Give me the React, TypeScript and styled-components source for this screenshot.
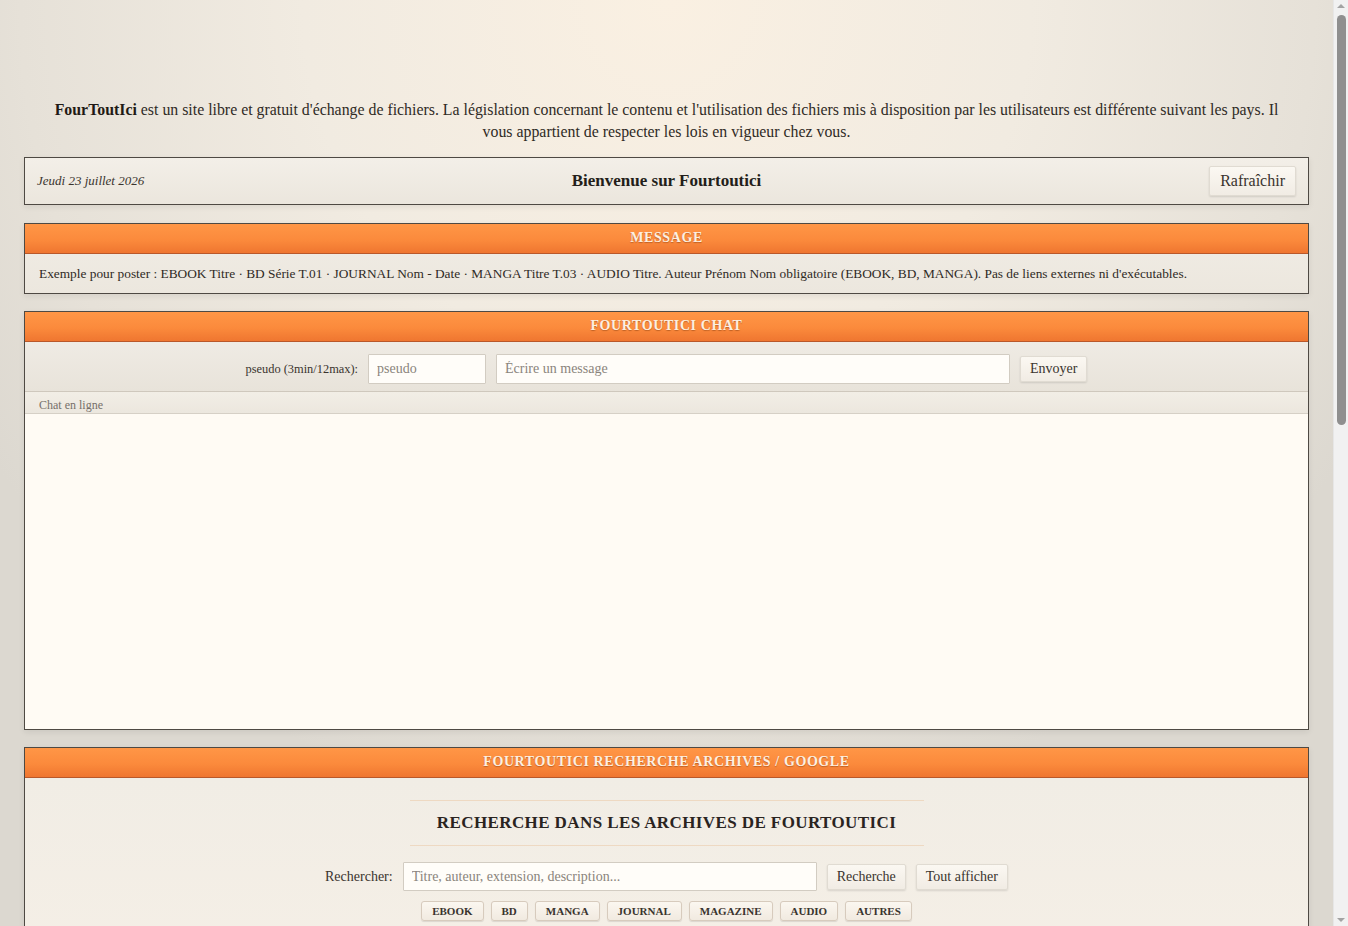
import React from "react";
import styled, { createGlobalStyle } from "styled-components";

const GlobalStyle = createGlobalStyle`
  html, body { margin: 0; padding: 0; }
  body {
    font-family: "Liberation Serif", "Times New Roman", serif;
    color: #2f2a25;
    background-color: #e4e0d8;
    background-image: radial-gradient(ellipse 60% 90% at 49.5% 0%, #faf0e2 0%, #f1ebe1 45%, #e6e1d8 80%, #dcd8d0 100%);
    background-attachment: fixed;
    min-height: 100vh;
  }
  * { box-sizing: border-box; }
`;

const Page = styled.div`
  padding: 99px 39px 40px 24px;
  display: flex;
  flex-direction: column;
`;

const ScrollTrack = styled.div`
  position: fixed;
  top: 0;
  right: 0;
  width: 15px;
  height: 100vh;
  background: #f1f1f1;
  border-left: 1px solid #e6e6e6;
  display: flex;
  flex-direction: column;
  align-items: center;
  justify-content: space-between;
  padding: 4px 0;
`;

const ScrollArrow = styled.div<{ $down?: boolean }>`
  width: 0;
  height: 0;
  border-left: 4px solid transparent;
  border-right: 4px solid transparent;
  ${(p) => (p.$down ? "border-top: 4px solid #a3a3a3;" : "border-bottom: 4px solid #a3a3a3;")}
`;

const ScrollThumb = styled.div`
  position: absolute;
  top: 15px;
  left: 3px;
  width: 9px;
  height: 410px;
  border-radius: 5px;
  background: #8f8f8f;
`;

const Intro = styled.p`
  margin: 0 0 14px;
  padding: 0 20px;
  text-align: center;
  font-size: 15.85px;
  line-height: 22px;
  color: #2f2a25;
  b { font-weight: bold; color: #1f1a15; }
`;

const WelcomeBar = styled.div`
  height: 48px;
  border: 1px solid #4e4943;
  background: linear-gradient(180deg, #f3efe8 0%, #ebe6dd 100%);
  box-shadow: 0 2px 6px rgba(0, 0, 0, 0.08);
  display: grid;
  grid-template-columns: 1fr auto 1fr;
  align-items: center;
  padding: 0 12px;
  margin-bottom: 18px;
`;

const DateText = styled.span`
  font-style: italic;
  font-size: 13px;
  color: #3a352f;
`;

const WelcomeTitle = styled.span`
  font-weight: bold;
  font-size: 17px;
  color: #231e19;
`;

const Button = styled.button<{ $size?: "lg" | "md" }>`
  font-family: "Liberation Serif", "Times New Roman", serif;
  font-size: ${(p) => (p.$size === "lg" ? "16px" : "14px")};
  height: ${(p) => (p.$size === "lg" ? "30px" : "26px")};
  padding: ${(p) => (p.$size === "lg" ? "0 10px" : "0 9px")};
  color: #3a342e;
  background: linear-gradient(180deg, #fbf8f2 0%, #f1ece4 100%);
  border: 1px solid #e0dbd2;
  border-radius: 2px;
  box-shadow: 0 1px 2px rgba(0, 0, 0, 0.12);
  cursor: pointer;
`;

const RightCell = styled.div`
  display: flex;
  justify-content: flex-end;
`;

const Panel = styled.section`
  border: 1px solid #4e4943;
  background: linear-gradient(180deg, #f1ede6 0%, #ece7de 100%);
  box-shadow: 0 2px 6px rgba(0, 0, 0, 0.08);
  margin-bottom: 17px;
  display: flex;
  flex-direction: column;
`;

const PanelHeader = styled.h2`
  margin: 0;
  height: 30px;
  padding-bottom: 2px;
  display: flex;
  align-items: center;
  justify-content: center;
  background: linear-gradient(180deg, #ff9646 0%, #fb8a3c 55%, #ef7630 100%);
  border-bottom: 1px solid #b9582a;
  color: #fdefe0;
  font-size: 14px;
  font-weight: bold;
  letter-spacing: 0.6px;
  text-transform: uppercase;
  text-shadow: 0 1px 1px rgba(120, 50, 10, 0.45);
`;

const MessageBody = styled.div`
  padding: 11px 14px 11px;
  font-size: 13.35px;
  line-height: 17px;
  color: #2f2a25;
`;

const ChatForm = styled.form`
  height: 50px;
  padding-top: 5px;
  display: flex;
  align-items: center;
  justify-content: center;
  gap: 10px;
  background: linear-gradient(180deg, #efebe4 0%, #e8e3da 100%);
  border-bottom: 1px solid #cfc8bd;
`;

const Label = styled.label<{ $size?: number }>`
  font-size: ${(p) => p.$size ?? 12.4}px;
  color: #3a342e;
`;

const Input = styled.input<{ $w: number; $h?: number }>`
  width: ${(p) => p.$w}px;
  height: ${(p) => p.$h ?? 30}px;
  font-family: "Liberation Serif", "Times New Roman", serif;
  font-size: 14px;
  padding: 0 8px;
  color: #2f2a25;
  background: #fffdf9;
  border: 1px solid #d2ccc2;
  border-radius: 1px;
  outline: none;
  &::placeholder { color: #8a847c; }
`;

const ChatStatus = styled.div`
  height: 22px;
  padding: 5px 14px 0;
  display: flex;
  align-items: center;
  font-size: 12px;
  color: #76706a;
  background: linear-gradient(180deg, #f2eee6 0%, #ece7de 100%);
  border-bottom: 1px solid #d6d0c6;
`;

const ChatLog = styled.div`
  height: 315px;
  background: #fffbf4;
`;

const SearchBody = styled.div`
  padding: 22px 14px 20px;
  display: flex;
  flex-direction: column;
  align-items: center;
  background: linear-gradient(180deg, #f1ede5 0%, #f5efe6 100%);
`;

const SearchHeading = styled.h3`
  margin: 0 0 16px;
  width: 514px;
  height: 46px;
  display: flex;
  align-items: center;
  justify-content: center;
  border-top: 1px solid #eed9c2;
  border-bottom: 1px solid #eed9c2;
  font-size: 17px;
  font-weight: bold;
  letter-spacing: 0.4px;
  color: #2a241f;
  text-transform: uppercase;
`;

const SearchRow = styled.div`
  display: flex;
  align-items: center;
  gap: 10px;
  margin-bottom: 10px;
`;

const CategoryRow = styled.div`
  display: flex;
  gap: 7px;
  flex-wrap: wrap;
  justify-content: center;
`;

const CategoryButton = styled.button`
  font-family: "Liberation Serif", "Times New Roman", serif;
  font-size: 11px;
  font-weight: bold;
  height: 20px;
  padding: 0 10px;
  color: #3a342e;
  background: linear-gradient(180deg, #fbf7f0 0%, #f1eae0 100%);
  border: 1px solid #d7cbbd;
  border-radius: 3px;
  box-shadow: 0 1px 1px rgba(0, 0, 0, 0.1);
  cursor: pointer;
`;

const ResultsNote = styled.p`
  margin: 14px 0 0;
  font-size: 13px;
  color: #6a645d;
`;

const FileTable = styled.div`
  display: flex;
  flex-direction: column;
`;

const FileRow = styled.div<{ $alt?: boolean }>`
  display: grid;
  grid-template-columns: 110px 1fr 140px 90px;
  align-items: center;
  height: 30px;
  padding: 0 14px;
  font-size: 13px;
  background: ${(p) => (p.$alt ? "#f7f2ea" : "#fffbf4")};
  border-bottom: 1px solid #e3ddd3;
`;

const Tag = styled.span`
  font-size: 11px;
  font-weight: bold;
  color: #c0602a;
`;

const Footer = styled.footer`
  text-align: center;
  font-size: 13px;
  color: #5a544d;
  padding: 20px 0;
`;

const categories = ["EBOOK", "BD", "MANGA", "JOURNAL", "MAGAZINE", "AUDIO", "AUTRES"];

const files = [
  ["EBOOK", "Les Misérables - Victor Hugo", "Pseudo01", "2,4 Mo"],
  ["BD", "Astérix T.01 - Goscinny Uderzo", "Lecteur", "48 Mo"],
  ["MANGA", "One Piece T.03 - Eiichiro Oda", "Mangafan", "62 Mo"],
  ["JOURNAL", "Le Monde - 23 juillet 2026", "Infos", "12 Mo"],
  ["MAGAZINE", "Science et Vie - Juillet 2026", "Curieux", "35 Mo"],
  ["AUDIO", "L'Étranger. Albert Camus", "Audio75", "210 Mo"],
  ["EBOOK", "Germinal - Émile Zola", "Pseudo01", "1,8 Mo"],
  ["BD", "Tintin T.05 - Hergé", "Lecteur", "51 Mo"],
  ["AUTRES", "Guide de cuisine - Recettes", "Chef", "8 Mo"],
  ["EBOOK", "Madame Bovary - Gustave Flaubert", "Bibli", "2,1 Mo"],
];

export default function App() {
  return (
    <>
      <GlobalStyle />
      <Page>
        <Intro>
          <b>FourToutIci</b> est un site libre et gratuit d'échange de fichiers. La législation concernant le contenu et
          l'utilisation des fichiers mis à disposition par les utilisateurs est différente suivant les pays. Il vous
          appartient de respecter les lois en vigueur chez vous.
        </Intro>

        <WelcomeBar>
          <DateText>Jeudi 23 juillet 2026</DateText>
          <WelcomeTitle>Bienvenue sur Fourtoutici</WelcomeTitle>
          <RightCell>
            <Button $size="lg" type="button">Rafraîchir</Button>
          </RightCell>
        </WelcomeBar>

        <Panel>
          <PanelHeader>Message</PanelHeader>
          <MessageBody>
            Exemple pour poster : EBOOK Titre · BD Série T.01 · JOURNAL Nom - Date · MANGA Titre T.03 · AUDIO Titre.
            Auteur Prénom Nom obligatoire (EBOOK, BD, MANGA). Pas de liens externes ni d'exécutables.
          </MessageBody>
        </Panel>

        <Panel>
          <PanelHeader>Fourtoutici Chat</PanelHeader>
          <ChatForm onSubmit={(e) => e.preventDefault()}>
            <Label htmlFor="pseudo">pseudo (3min/12max):</Label>
            <Input id="pseudo" $w={118} placeholder="pseudo" />
            <Input $w={514} placeholder="Écrire un message" />
            <Button type="submit">Envoyer</Button>
          </ChatForm>
          <ChatStatus>Chat en ligne</ChatStatus>
          <ChatLog />
        </Panel>

        <Panel>
          <PanelHeader>Fourtoutici Recherche Archives / Google</PanelHeader>
          <SearchBody>
            <SearchHeading>Recherche dans les archives de Fourtoutici</SearchHeading>
            <SearchRow>
              <Label $size={14} htmlFor="q">Rechercher:</Label>
              <Input id="q" $w={414} $h={29} placeholder="Titre, auteur, extension, description..." />
              <Button type="button">Recherche</Button>
              <Button type="button">Tout afficher</Button>
            </SearchRow>
            <CategoryRow>
              {categories.map((c) => (
                <CategoryButton key={c} type="button">{c}</CategoryButton>
              ))}
            </CategoryRow>
            <ResultsNote>Sélectionnez une catégorie ou saisissez un mot-clé pour lancer la recherche.</ResultsNote>
          </SearchBody>
        </Panel>

        <Panel>
          <PanelHeader>Derniers fichiers partagés</PanelHeader>
          <FileTable>
            {files.map((f, i) => (
              <FileRow key={i} $alt={i % 2 === 1}>
                <Tag>{f[0]}</Tag>
                <span>{f[1]}</span>
                <span>{f[2]}</span>
                <span>{f[3]}</span>
              </FileRow>
            ))}
          </FileTable>
        </Panel>

        <Panel>
          <PanelHeader>Recherche Google</PanelHeader>
          <SearchBody>
            <SearchRow>
              <Label $size={14} htmlFor="g">Google:</Label>
              <Input id="g" $w={414} $h={29} placeholder="Rechercher sur le web..." />
              <Button type="button">Recherche</Button>
            </SearchRow>
          </SearchBody>
        </Panel>

        <Footer>FourToutIci · Site libre et gratuit d'échange de fichiers · 2026</Footer>
      </Page>
      <ScrollTrack aria-hidden="true">
        <ScrollArrow />
        <ScrollThumb />
        <ScrollArrow $down />
      </ScrollTrack>
    </>
  );
}
